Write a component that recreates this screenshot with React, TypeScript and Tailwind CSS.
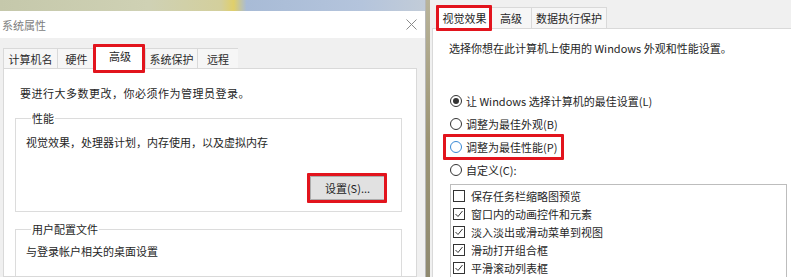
import React from "react";

const FONT = { fontFamily: '"Noto Sans CJK SC", "Microsoft YaHei", "Noto Sans", sans-serif' };

function Radio({ checked, focus }: { checked?: boolean; focus?: boolean }) {
  return (
    <span
      className={
        "flex h-[12px] w-[12px] shrink-0 items-center justify-center rounded-full border bg-white " +
        (focus ? "border-[#3a8ad6]" : "border-[#333333]")
      }
    >
      {checked && <span className="h-[6px] w-[6px] rounded-full bg-[#333333]" />}
    </span>
  );
}

function Check({ checked }: { checked?: boolean }) {
  return (
    <span className="flex h-[12px] w-[12px] shrink-0 items-center justify-center border border-[#333333] bg-white">
      {checked && (
        <svg width="10" height="10" viewBox="0 0 10 10">
          <path d="M1.5 5 L4 7.5 L8.5 2" fill="none" stroke="#333" strokeWidth="1" />
        </svg>
      )}
    </span>
  );
}

export default function App() {
  const leftTabs = ["计算机名", "硬件", "高级", "系统保护", "远程"];
  const leftTabW = [54, 38, 50, 52, 41];
  const checks: [string, boolean][] = [
    ["保存任务栏缩略图预览", false],
    ["窗口内的动画控件和元素", true],
    ["淡入淡出或滑动菜单到视图", true],
    ["滑动打开组合框", true],
    ["平滑滚动列表框", true],
  ];
  return (
    <div className="flex h-[277px] w-[791px] overflow-hidden bg-white text-[11px] text-[#262626]" style={FONT}>
      {/* Left window */}
      <div className="flex w-[426px] shrink-0 flex-col border-r border-[#b8b8b8]">
        <div className="h-[11px] bg-[linear-gradient(90deg,#c5c8ab_0%,#cfd1b4_35%,#d3cf9c_52%,#e0cf6a_55%,#a8bbd6_58%,#b4c4dc_85%,#c2ccd8_100%)]" />
        <div className="flex h-[27px] items-center justify-between bg-white pl-[2px] pr-[8px]">
          <span className="text-[11px] leading-[14px] text-[#7d7d7d]">系统属性</span>
          <svg width="11" height="11" viewBox="0 0 11 11">
            <path d="M0.5 0.5 L10.5 10.5 M10.5 0.5 L0.5 10.5" stroke="#8a8a8a" strokeWidth="1" />
          </svg>
        </div>
        <div className="flex flex-1 flex-col bg-[#f0f0f0] pl-[3px] pr-[8px]">
          <div className="flex h-[30px] items-end">
            {leftTabs.map((t, i) =>
              i === 2 ? (
                <div
                  key={t}
                  className="relative -mb-[1px] flex h-[23px] items-center justify-center bg-white text-[#1e1e1e]"
                  style={{ width: leftTabW[i] }}
                >
                  <span className="-mt-[4px] leading-[14px]">{t}</span>
                  <span className="absolute -left-[2px] -top-[2px] -bottom-[4px] right-0 rounded-[1px] border-[3px] border-[#e2141d]" />
                </div>
              ) : (
                <div
                  key={t}
                  className="flex h-[20px] items-center justify-center border-l border-t border-[#d9d9d9] bg-[#f6f6f6] text-[#2a2a2a]"
                  style={{ width: leftTabW[i] }}
                >
                  <span className="leading-[14px]">{t}</span>
                </div>
              )
            )}
          </div>
          <div className="flex flex-1 flex-col border border-[#d9d9d9] bg-white">
            <div className="pl-[16px] pt-[16px] leading-[16px] tracking-[0.5px]">要进行大多数更改，你必须作为管理员登录。</div>
            <fieldset className="ml-[11px] mr-[14px] mt-[10px] border border-[#dcdcdc] pb-[11px] pl-[10px]">
              <legend className="ml-[5px] px-[1px] leading-[14px]">性能</legend>
              <div className="mt-[9px] leading-[16px]">视觉效果，处理器计划，内存使用，以及虚拟内存</div>
              <div className="mt-[26px] flex justify-end pr-[16px]">
                <div className="relative flex h-[24px] w-[75px] items-center justify-center border border-[#adadad] bg-[#e1e1e1] text-[#1e1e1e]">
                  <span className="leading-[14px]">设置(S)...</span>
                  <span className="absolute -left-[4px] -top-[4px] -right-[3px] -bottom-[4px] rounded-[1px] border-[3px] border-[#e2141d]" />
                </div>
              </div>
            </fieldset>
            <fieldset className="ml-[11px] mr-[14px] mt-[10px] flex-1 border border-b-0 border-[#dcdcdc] pl-[10px]">
              <legend className="ml-[5px] px-[1px] leading-[14px]">用户配置文件</legend>
              <div className="mt-[7px] leading-[16px]">与登录帐户相关的桌面设置</div>
            </fieldset>
          </div>
        </div>
      </div>
      {/* desktop gap */}
      <div className="w-[4px] shrink-0 bg-[linear-gradient(180deg,#b9b49a_0%,#9c9474_50%,#8f8a70_100%)]" />
      {/* Right window */}
      <div className="flex flex-1 flex-col bg-[#f0f0f0]">
        <div className="flex h-[33px] items-end pl-[8px]">
          <div className="relative -mb-[1px] flex h-[22px] w-[53px] items-center justify-center bg-white text-[#1e1e1e]">
            <span className="leading-[14px]">视觉效果</span>
            <span className="absolute -left-[2px] -top-[2px] -right-[1px] -bottom-[2px] rounded-[1px] border-[3px] border-[#e2141d]" />
          </div>
          <div className="flex h-[21px] w-[41px] items-center justify-center border-r border-t border-[#d9d9d9] bg-[#f6f6f6]">
            <span className="leading-[14px]">高级</span>
          </div>
          <div className="flex h-[21px] w-[75px] items-center justify-center border-r border-t border-[#d9d9d9] bg-[#f6f6f6]">
            <span className="leading-[14px]">数据执行保护</span>
          </div>
        </div>
        <div className="ml-[2px] flex flex-1 flex-col border-l border-t border-[#d9d9d9] bg-white">
          <div className="pl-[16px] pt-[11px] leading-[16px]">选择你想在此计算机上使用的 Windows 外观和性能设置。</div>
          <div className="mt-[33px] flex flex-col pl-[17px]">
            <div className="flex h-[23px] items-center gap-[4px]">
              <Radio checked />
              <span className="leading-[14px]">让 Windows 选择计算机的最佳设置(L)</span>
            </div>
            <div className="flex h-[23px] items-center gap-[4px]">
              <Radio />
              <span className="leading-[14px]">调整为最佳外观(B)</span>
            </div>
            <div className="flex h-[23px] items-center">
              <div className="relative flex items-center gap-[4px]">
                <Radio focus />
                <span className="leading-[14px]">调整为最佳性能(P)</span>
                <span className="absolute -left-[7px] -top-[6px] -right-[7px] -bottom-[6px] rounded-[1px] border-[3px] border-[#e2141d]" />
              </div>
            </div>
            <div className="flex h-[23px] items-center gap-[4px]">
              <Radio />
              <span className="leading-[14px]">自定义(C):</span>
            </div>
          </div>
          <div className="ml-[17px] mr-[4px] mt-[3px] flex-1 border border-b-0 border-[#bdbdbd] pl-[2px] pt-[2px]">
            {checks.map(([t, c]) => (
              <div key={t} className="flex h-[18px] items-center gap-[6px]">
                <Check checked={c} />
                <span className="leading-[14px]">{t}</span>
              </div>
            ))}
          </div>
        </div>
      </div>
    </div>
  );
}
